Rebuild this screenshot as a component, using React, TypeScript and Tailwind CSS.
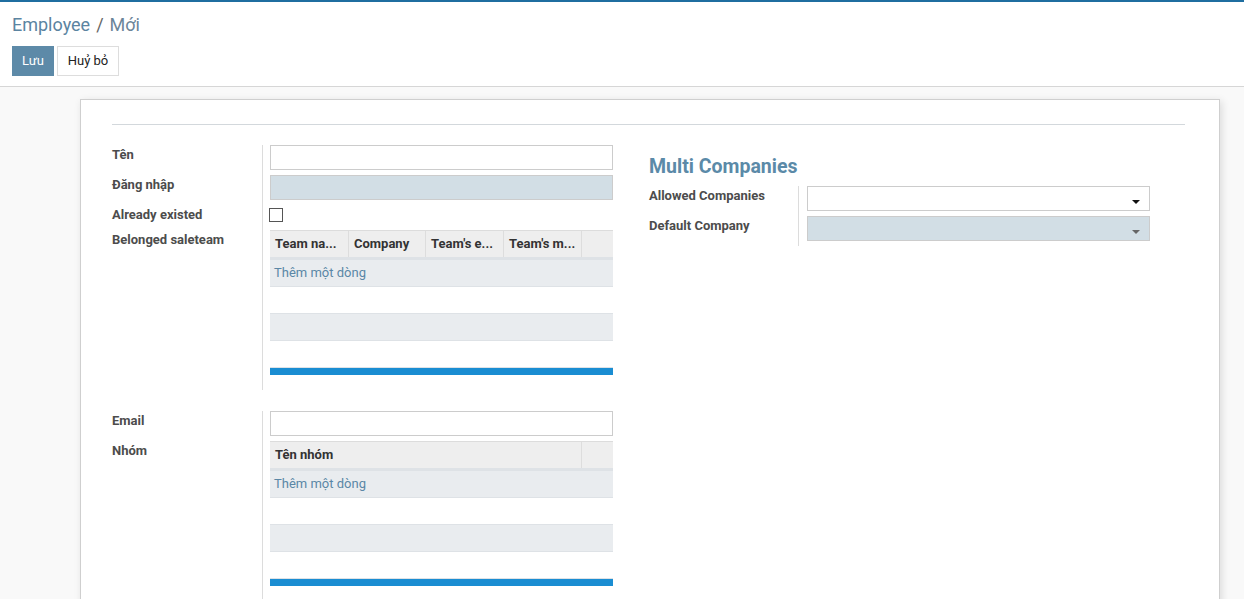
import React from "react";

function Caret({ muted }: { muted?: boolean }) {
  return (
    <svg width="8" height="5" viewBox="0 0 8 5" className="absolute right-[9px] top-[13px]">
      <path d="M0 0 L8 0 L4 4 Z" fill={muted ? "#666" : "#111"} />
    </svg>
  );
}

function O2MTable({ columns }: { columns: { label: string; w: string }[] }) {
  return (
    <div className="w-[343px]">
      <div className="flex h-[27px] border-t border-[#dcdcdc] bg-[#eeeeee]">
        {columns.map((c, i) => (
          <div
            key={i}
            className={`${c.w} border-r border-[#dddddd] pl-[5px] leading-[25px] text-[13px] font-bold text-[#333] truncate`}
          >
            {c.label}
          </div>
        ))}
        <div className="flex-1" />
      </div>
      <div className="h-[3px] bg-[#dee2e6]" />
      <div className="h-[27px] bg-[#e9ecef] border-b border-[#dee2e6] pl-[4px] leading-[26px] text-[13px] text-[#5a87a6]">
        Thêm một dòng
      </div>
      <div className="h-[27px] bg-white border-b border-[#dee2e6]" />
      <div className="h-[27px] bg-[#e9ecef] border-b border-[#dee2e6]" />
      <div className="h-[27px] bg-white border-b border-[#dee2e6]" />
      <div className="h-[7px] bg-[#1a8dd2]" />
    </div>
  );
}

function Label({ children, className = "" }: { children: React.ReactNode; className?: string }) {
  return (
    <div className={`text-[13px] font-bold text-[#4c4c4c] leading-[18px] pt-px ${className}`}>{children}</div>
  );
}

export default function App() {
  return (
    <div className="h-[599px] overflow-hidden bg-[#f9f9f9] font-['Roboto',sans-serif]">
      {/* control panel */}
      <div className="bg-white border-t-2 border-[#1f6ea0] border-b border-b-[#d6d6d6] h-[87px] px-3">
        <div className="pt-[11px] text-[18px] leading-[24px] text-[#5b84a1]">
          <span>Employee</span>
          <span className="text-[#666] mx-[6px]">/</span>
          <span className="text-[#6b8599]">Mới</span>
        </div>
        <div className="flex gap-[3px] mt-[9px]">
          <button className="h-[30px] w-[42px] bg-[#5d8aa8] text-white text-[13px]">Lưu</button>
          <button className="h-[30px] w-[62px] bg-white border border-[#dddddd] text-[#222] text-[13px]">Huỷ bỏ</button>
        </div>
      </div>

      {/* sheet */}
      <div className="ml-[80px] mt-3 w-[1140px] h-[520px] bg-white border border-[#cfcfcf] shadow-[2px_2px_8px_rgba(0,0,0,0.12)] pl-[31px] pr-8 pt-6">
        <div className="h-px bg-[#d3d8dc] mr-[2px]" />

        <div className="flex mt-5">
          {/* left column */}
          <div className="w-[502px]">
            <div className="grid grid-cols-[150px_351px]">
              <Label>Tên</Label>
              <div className="border-l border-[#dcdcdc] pl-[7px] pb-[5px]">
                <div className="h-[25px] border border-[#cccccc] bg-white" />
              </div>
              <Label>Đăng nhập</Label>
              <div className="border-l border-[#dcdcdc] pl-[7px] pb-[5px]">
                <div className="h-[25px] border border-[#cccccc] bg-[#d2dee5]" />
              </div>
              <Label>Already existed</Label>
              <div className="border-l border-[#dcdcdc] pl-[6px] pt-[3px] h-[25px]">
                <div className="w-[14px] h-[14px] border border-[#555] bg-white" />
              </div>
              <Label>Belonged saleteam</Label>
              <div className="border-l border-[#dcdcdc] pl-[7px] pb-[15px]">
                <O2MTable
                  columns={[
                    { label: "Team na...", w: "w-[79px]" },
                    { label: "Company", w: "w-[77px]" },
                    { label: "Team's e...", w: "w-[78px]" },
                    { label: "Team's m...", w: "w-[78px]" },
                  ]}
                />
              </div>
            </div>

            <div className="grid grid-cols-[150px_351px] mt-[21px]">
              <Label>Email</Label>
              <div className="border-l border-[#dcdcdc] pl-[7px] pb-[5px]">
                <div className="h-[25px] border border-[#cccccc] bg-white" />
              </div>
              <Label>Nhóm</Label>
              <div className="border-l border-[#dcdcdc] pl-[7px] pb-[30px]">
                <O2MTable columns={[{ label: "Tên nhóm", w: "w-[312px]" }]} />
              </div>
            </div>
          </div>

          {/* right column */}
          <div className="ml-[35px] w-[502px] pt-[9px]">
            <div className="text-[19.5px] leading-[26px] font-bold text-[#5b8aa8]">Multi Companies</div>
            <div className="grid grid-cols-[149px_352px] mt-[6px]">
              <Label>Allowed Companies</Label>
              <div className="border-l border-[#dcdcdc] pl-2 pb-[5px]">
                <div className="relative h-[25px] border border-[#cccccc] bg-white">
                  <Caret />
                </div>
              </div>
              <Label>Default Company</Label>
              <div className="border-l border-[#dcdcdc] pl-2 pb-[5px]">
                <div className="relative h-[25px] border border-[#cccccc] bg-[#d2dee5]">
                  <Caret muted />
                </div>
              </div>
            </div>
          </div>
        </div>
      </div>
    </div>
  );
}
